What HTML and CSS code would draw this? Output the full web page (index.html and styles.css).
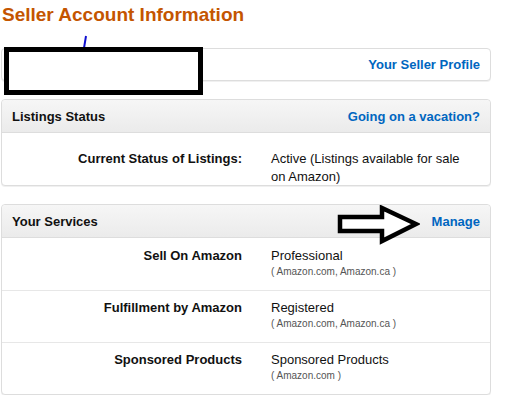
FILE: index.html
```html
<!DOCTYPE html>
<html>
<head>
<meta charset="utf-8">
<link rel="stylesheet" href="styles.css">
</head>
<body>
<div class="page">
  <h1 class="title">Seller Account Information</h1>

  <div class="box profile">
    <a class="link" href="#">Your Seller Profile</a>
  </div>

  <div class="box">
    <div class="box-head">
      <span class="head-title">Listings Status</span>
      <a class="link" href="#">Going on a vacation?</a>
    </div>
    <div class="row row-status">
      <div class="label">Current Status of Listings:</div>
      <div class="value">Active (Listings available for sale<br>on Amazon)</div>
    </div>
  </div>

  <div class="box">
    <div class="box-head">
      <span class="head-title">Your Services</span>
      <a class="link" href="#">Manage</a>
    </div>
    <div class="row">
      <div class="label">Sell On Amazon</div>
      <div class="value">Professional<div class="sub">( Amazon.com, Amazon.ca )</div></div>
    </div>
    <div class="row sep">
      <div class="label">Fulfillment by Amazon</div>
      <div class="value">Registered<div class="sub">( Amazon.com, Amazon.ca )</div></div>
    </div>
    <div class="row sep">
      <div class="label">Sponsored Products</div>
      <div class="value">Sponsored Products<div class="sub">( Amazon.com )</div></div>
    </div>
  </div>

  <svg class="pen-line" width="10" height="16" viewBox="0 0 10 16"><line x1="6" y1="1" x2="4" y2="13" stroke="#1010d0" stroke-width="2"/></svg>
  <div class="redact"></div>
  <svg class="arrow" width="84" height="40" viewBox="0 0 84 40"><polygon points="4,12 46,12 46,3 80,19 46,36 46,26 4,26" fill="#fff" stroke="#000" stroke-width="4.5" stroke-linejoin="miter"/></svg>
</div>
</body>
</html>
```

FILE: styles.css
```css
* { box-sizing: border-box; }
html, body { margin: 0; padding: 0; background: #fff; }
body {
  font-family: "Liberation Sans", Arial, sans-serif;
  font-size: 13px;
  color: #111;
}
.page {
  position: relative;
  width: 505px;
  padding: 0 14px 0 1px;
}
.title {
  margin: 4px 0 0 1px;
  font-size: 19px;
  line-height: 22px;
  font-weight: bold;
  color: #c45500;
}
.box {
  width: 490px;
  border: 1px solid #ddd;
  border-radius: 4px;
  background: #fff;
  box-shadow: 0 1px 0 rgba(0,0,0,0.06);
}
.profile {
  margin-top: 22px;
  height: 33px;
  display: flex;
  align-items: center;
  justify-content: flex-end;
  padding-right: 10px;
}
.box + .box { margin-top: 18px; }
.box:last-of-type { margin-top: 19px; }
.link {
  color: #0066c0;
  font-weight: bold;
  text-decoration: none;
  font-size: 13px;
}
.box-head {
  height: 33px;
  display: flex;
  align-items: center;
  justify-content: space-between;
  padding: 1px 10px 0 10px;
  background: linear-gradient(#f6f6f6, #ebebeb);
  border-bottom: 1px solid #ddd;
  border-radius: 4px 4px 0 0;
}
.head-title { font-weight: bold; color: #111; }
.row {
  display: flex;
  column-gap: 29px;
  padding: 9px 0 11px;
  line-height: 18px;
}
.row.sep { padding-top: 8px; border-top: 1px solid #e7e7e7; }
.row-status { padding: 17px 0 0; height: 52px; }
.label {
  width: 240px;
  flex: none;
  text-align: right;
  font-weight: bold;
}
.value { color: #111; }
.sub {
  font-size: 10px;
  line-height: 14px;
  color: #555;
}
.pen-line {
  position: absolute;
  left: 80px;
  top: 31px;
}
.redact {
  position: absolute;
  left: 4px;
  top: 43px;
  width: 199px;
  height: 48px;
  border: 5px solid #000;
  background: #fff;
}
.arrow {
  position: absolute;
  left: 336px;
  top: 201px;
}
```
